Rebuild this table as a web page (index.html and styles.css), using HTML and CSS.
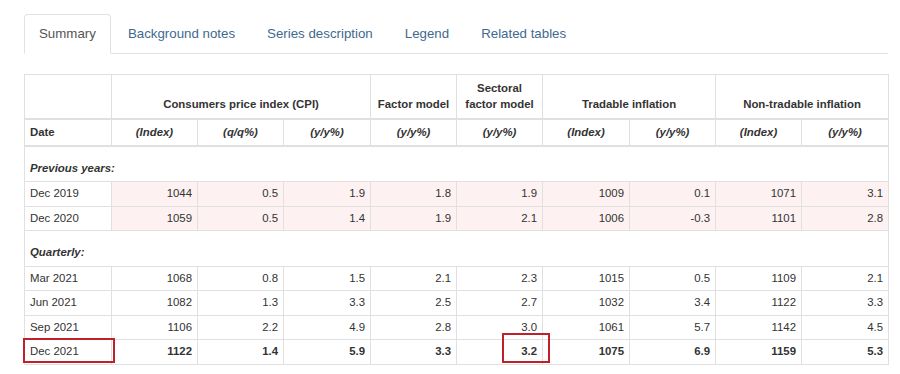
FILE: index.html
```html
<!DOCTYPE html>
<html lang="en">
<head>
<meta charset="utf-8">
<title>CPI Summary</title>
<link rel="stylesheet" href="styles.css">
</head>
<body>
<div class="page">
  <ul class="tabs">
    <li class="tab active"><a>Summary</a></li>
    <li class="tab"><a>Background notes</a></li>
    <li class="tab"><a>Series description</a></li>
    <li class="tab"><a>Legend</a></li>
    <li class="tab"><a>Related tables</a></li>
  </ul>

  <div class="table-wrap">
    <table class="data">
      <colgroup>
        <col class="c87"><col class="c86"><col class="c86"><col class="c87"><col class="c86">
        <col class="c86"><col class="c87"><col class="c86"><col class="c86"><col class="c87">
      </colgroup>
      <thead>
        <tr class="h1">
          <th></th>
          <th colspan="3">Consumers price index (CPI)</th>
          <th>Factor model</th>
          <th>Sectoral<br>factor model</th>
          <th colspan="2">Tradable inflation</th>
          <th colspan="2">Non-tradable inflation</th>
        </tr>
        <tr class="h2">
          <th class="date">Date</th>
          <th class="unit">(Index)</th>
          <th class="unit">(q/q%)</th>
          <th class="unit">(y/y%)</th>
          <th class="unit">(y/y%)</th>
          <th class="unit">(y/y%)</th>
          <th class="unit">(Index)</th>
          <th class="unit">(y/y%)</th>
          <th class="unit">(Index)</th>
          <th class="unit">(y/y%)</th>
        </tr>
      </thead>
      <tbody>
        <tr class="group"><td colspan="10">Previous years:</td></tr>
        <tr class="prev">
          <td class="d">Dec 2019</td><td>1044</td><td>0.5</td><td>1.9</td><td>1.8</td><td>1.9</td><td>1009</td><td>0.1</td><td>1071</td><td>3.1</td>
        </tr>
        <tr class="prev">
          <td class="d">Dec 2020</td><td>1059</td><td>0.5</td><td>1.4</td><td>1.9</td><td>2.1</td><td>1006</td><td>-0.3</td><td>1101</td><td>2.8</td>
        </tr>
        <tr class="group"><td colspan="10">Quarterly:</td></tr>
        <tr>
          <td class="d">Mar 2021</td><td>1068</td><td>0.8</td><td>1.5</td><td>2.1</td><td>2.3</td><td>1015</td><td>0.5</td><td>1109</td><td>2.1</td>
        </tr>
        <tr>
          <td class="d">Jun 2021</td><td>1082</td><td>1.3</td><td>3.3</td><td>2.5</td><td>2.7</td><td>1032</td><td>3.4</td><td>1122</td><td>3.3</td>
        </tr>
        <tr>
          <td class="d">Sep 2021</td><td>1106</td><td>2.2</td><td>4.9</td><td>2.8</td><td>3.0</td><td>1061</td><td>5.7</td><td>1142</td><td>4.5</td>
        </tr>
        <tr class="latest">
          <td class="d">Dec 2021</td><td>1122</td><td>1.4</td><td>5.9</td><td>3.3</td><td>3.2</td><td>1075</td><td>6.9</td><td>1159</td><td>5.3</td>
        </tr>
      </tbody>
    </table>
    <span class="mark mark-date"></span>
    <span class="mark mark-value"></span>
  </div>
</div>
</body>
</html>
```

FILE: styles.css
```css
html, body {
  margin: 0;
  padding: 0;
  background: #ffffff;
}

body {
  font-family: "Liberation Sans", Arial, sans-serif;
  color: #333333;
}

.page {
  padding: 14px 0 0 24px;
  width: 864px;
}

.tabs {
  list-style: none;
  margin: 0 0 20px 0;
  padding: 0;
  display: flex;
  gap: 2px;
  border-bottom: 1px solid #e2e2e2;
}

.tab {
  margin-bottom: -1px;
}

.tab a {
  display: block;
  padding: 10px 14px;
  line-height: 18px;
  font-size: 13.3px;
  color: #41698f;
  border: 1px solid transparent;
  border-radius: 4px 4px 0 0;
}

.tab.active a {
  color: #555555;
  background: #ffffff;
  border-color: #e2e2e2 #e2e2e2 transparent;
}

.table-wrap {
  position: relative;
}

.data {
  width: 865px;
  table-layout: fixed;
  border-collapse: collapse;
  font-size: 11.4px;
  line-height: 15.5px;
  border: 1px solid #e0e0e0;
}

.c87 { width: 87px; }
.c86 { width: 86px; }

.data th,
.data td {
  border: 1px solid #e0e0e0;
  padding: 4px 5px;
}

.data th {
  font-weight: bold;
  text-align: center;
  vertical-align: bottom;
}

.data .h1 th {
  padding: 5px 5px 6px;
  line-height: 16px;
  border-bottom: 2px solid #e0e0e0;
}

.data .h2 th {
  padding: 5px 5px 4px;
  border-bottom: 2px solid #e0e0e0;
}

.data th.date {
  text-align: left;
}

.data th.unit {
  font-style: italic;
}

.data td {
  text-align: right;
}

.data td.d {
  text-align: left;
}

.data .group td {
  text-align: left;
  font-weight: bold;
  font-style: italic;
  padding: 14px 5px 5px;
}

.data .prev td {
  background: #fdf1f1;
}

.data .prev td.d {
  background: #ffffff;
}

.data .latest td {
  font-weight: bold;
}

.data .latest td.d {
  font-weight: normal;
}

.mark {
  position: absolute;
  border: 2px solid #c0202b;
  box-sizing: border-box;
}

.mark-date {
  left: -1px;
  top: 264px;
  width: 92px;
  height: 25px;
}

.mark-value {
  left: 478px;
  top: 259px;
  width: 48px;
  height: 30px;
}
```
